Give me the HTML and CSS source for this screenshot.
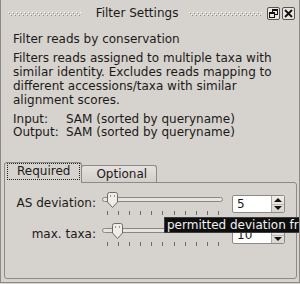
FILE: index.html
```html
<!DOCTYPE html>
<html lang="en">
<head>
  <meta charset="UTF-8">
  <title>Filter Settings</title>
  <link rel="stylesheet" href="styles.css">
</head>
<body>

  <div class="window">
    <div class="titlebar">
      <span class="dots"></span>
      <span class="title">Filter Settings</span>
      <span class="dots"></span>
      <span class="tb-btns">
        <span class="tb-btn">
          <svg width="11" height="11" viewBox="0 0 11 11">
            <rect x="4.5" y="1.5" width="5" height="5" fill="none" stroke="#111" stroke-width="1"/>
            <rect x="4" y="1" width="6" height="2" fill="#111"/>
            <rect x="1.5" y="4.5" width="5" height="5" fill="#e8e6e3" stroke="#111" stroke-width="1"/>
            <rect x="1" y="4" width="6" height="2" fill="#111"/>
          </svg>
        </span>
        <span class="tb-btn">
          <svg width="11" height="11" viewBox="0 0 11 11">
            <path d="M2 2 L9 9 M9 2 L2 9" stroke="#111" stroke-width="1.8"/>
          </svg>
        </span>
      </span>
    </div>

    <div class="intro">
      <p class="heading">Filter reads by conservation</p>
      <p class="desc">Filters reads assigned to multiple taxa with similar identity. Excludes reads mapping to different accessions/taxa with similar alignment scores.</p>
      <div class="io">
        <span>Input:</span><span>SAM (sorted by queryname)</span>
        <span>Output:</span><span>SAM (sorted by queryname)</span>
      </div>
    </div>

    <div class="tabwidget">
      <div class="tabbar">
        <div class="tab active"><span class="focus">Required</span></div>
        <div class="tab">Optional</div>
      </div>
      <div class="panel">
        <div class="params">
          <span class="label">AS deviation:</span>
          <div class="slider">
            <div class="groove"></div>
            <svg class="handle" style="left:5px" width="11" height="16" viewBox="0 0 11 16">
              <path d="M0.5 2.5 Q0.5 0.5 2.5 0.5 L8.5 0.5 Q10.5 0.5 10.5 2.5 L10.5 10 L5.5 15.5 L0.5 10 Z" fill="#eeece9" stroke="#6c6966"/>
              <rect x="3" y="3" width="1" height="2" fill="#9a9692"/>
              <rect x="7" y="3" width="1" height="2" fill="#9a9692"/>
            </svg>
            <div class="ticks">
              <i></i><i></i><i></i><i></i><i></i><i></i><i></i><i></i><i></i><i></i><i></i>
            </div>
          </div>
          <div class="spin">
            <span class="spin-val">5</span>
            <span class="spin-btns"><span class="up"></span><span class="down"></span></span>
          </div>

          <span class="label">max. taxa:</span>
          <div class="slider">
            <div class="groove"></div>
            <svg class="handle" style="left:10px" width="11" height="16" viewBox="0 0 11 16">
              <path d="M0.5 2.5 Q0.5 0.5 2.5 0.5 L8.5 0.5 Q10.5 0.5 10.5 2.5 L10.5 10 L5.5 15.5 L0.5 10 Z" fill="#eeece9" stroke="#6c6966"/>
              <rect x="3" y="3" width="1" height="2" fill="#9a9692"/>
              <rect x="7" y="3" width="1" height="2" fill="#9a9692"/>
            </svg>
            <div class="ticks">
              <i></i><i></i><i></i><i></i><i></i><i></i><i></i><i></i><i></i><i></i><i></i>
            </div>
          </div>
          <div class="spin">
            <span class="spin-val">10</span>
            <span class="spin-btns"><span class="up"></span><span class="down"></span></span>
          </div>
        </div>
      </div>
    </div>

    <div class="tooltip">permitted deviation from best alignment score</div>
  </div>

</body>
</html>
```

FILE: styles.css
```css
* { box-sizing: border-box; }
body {
  margin: 0;
  background: #d6d2ce;
  font-family: "DejaVu Sans", sans-serif;
  font-size: 12px;
  color: #1c1a18;
  overflow: hidden;
}
.window {
  position: relative;
  width: 300px;
  height: 283px;
  border: 1px solid #8d8985;
  border-top: none;
  overflow: hidden;
}
.titlebar {
  height: 26px;
  display: flex;
  align-items: center;
  padding: 0 4px 0 7px;
}
.dots {
  flex: 1;
  height: 4px;
  margin-top: 2px;
  background-image:
    linear-gradient(90deg, #ffffff 1px, transparent 1px),
    linear-gradient(90deg, #8f8b87 1px, transparent 1px),
    linear-gradient(90deg, #ffffff 1px, transparent 1px),
    linear-gradient(90deg, #8f8b87 1px, transparent 1px);
  background-size: 4px 1px;
  background-position: 0 0, 1px 1px, 2px 2px, 3px 3px;
  background-repeat: repeat-x;
}
.title {
  margin: 0 11px 0 15px;
  line-height: 14px;
}
.tb-btns {
  display: flex;
  gap: 2px;
  margin-left: 5px;
}
.tb-btn {
  width: 13px;
  height: 13px;
  border: 1px solid #55524f;
  border-radius: 2px;
  background: #e8e6e3;
  display: flex;
  align-items: center;
  justify-content: center;
}
.intro {
  padding: 0 12px;
}
.intro p {
  margin: 0;
  line-height: 14px;
}
.heading {
  margin-top: 6px !important;
}
.desc {
  margin-top: 5px !important;
}
.io {
  margin-top: 6px;
  display: grid;
  grid-template-columns: 53px auto;
  line-height: 13px;
}
.tabwidget {
  margin: 23px 2px 0 3px;
}
.tabbar {
  display: flex;
  align-items: flex-end;
  height: 20px;
}
.tab {
  height: 17px;
  border: 1px solid #8d8985;
  border-bottom: none;
  border-radius: 3px 3px 0 0;
  background: linear-gradient(#e4e1de, #d2cecb);
  padding: 0 9px 0 14px;
  line-height: 16px;
  margin-left: -1px;
}
.tab.active {
  position: relative;
  z-index: 1;
  height: 21px;
  margin: 0 0 -1px 0;
  padding: 0 1px;
  background: #d6d2ce;
}
.focus {
  display: inline-block;
  margin: 0 0 0 1px;
  padding: 0 9px;
  border: 1px dotted #222;
  line-height: 15px;
}
.panel {
  height: 97px;
  border: 1px solid #8d8985;
  border-radius: 0 3px 3px 3px;
  padding: 8px 0 0 8px;
}
.params {
  display: grid;
  grid-template-columns: 83px 121px 56px;
  grid-auto-rows: 31px;
  column-gap: 6px;
  align-items: start;
}
.label {
  text-align: right;
  margin-top: 5px;
  line-height: 14px;
}
.slider {
  position: relative;
  height: 25px;
}
.groove {
  margin-top: 6px;
  height: 5px;
  border: 1px solid #8a8682;
  border-radius: 3px;
  background: #e6e3e0;
}
.handle {
  position: absolute;
  top: 1px;
}
.ticks {
  margin-top: 9px;
  height: 4px;
  display: flex;
  justify-content: space-between;
  padding: 0 4px 0 5px;
}
.ticks i {
  width: 1px;
  height: 4px;
  background: #6e6b68;
}
.spin {
  justify-self: end;
  width: 53px;
  height: 18px;
  margin-top: 4px;
  display: flex;
  border: 1px solid #8d8985;
  border-radius: 2px;
  background: #fff;
}
.spin-val {
  flex: 1;
  padding-left: 4px;
  line-height: 16px;
}
.spin-btns {
  width: 13px;
  display: flex;
  flex-direction: column;
  border-left: 1px solid #a8a4a0;
  background: linear-gradient(#f0eeec, #d8d5d2);
}
.spin-btns span {
  flex: 1;
  display: flex;
  align-items: center;
  justify-content: center;
}
.spin-btns .up { border-bottom: 1px solid #bdb9b5; }
.spin-btns .up::before {
  content: "";
  border-left: 4px solid transparent;
  border-right: 4px solid transparent;
  border-bottom: 4px solid #111;
}
.spin-btns .down::before {
  content: "";
  border-left: 4px solid transparent;
  border-right: 4px solid transparent;
  border-top: 4px solid #111;
}
.tooltip {
  position: absolute;
  left: 163px;
  top: 217px;
  white-space: nowrap;
  background: #0e0e0e;
  color: #f2f2f2;
  border: 1px solid #3c3c3c;
  padding: 0 2px;
  line-height: 14px;
  z-index: 5;
}
```
